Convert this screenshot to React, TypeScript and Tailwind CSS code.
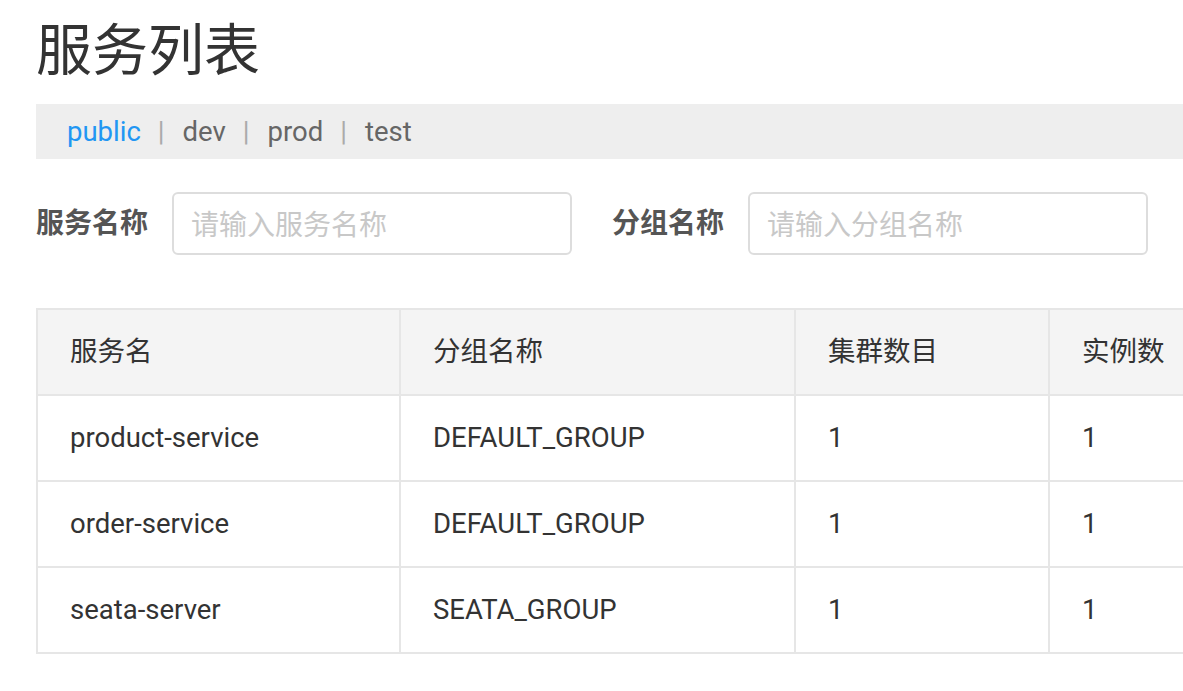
const namespaces = ['public', 'dev', 'prod', 'test'];

const rows = [
  { name: 'product-service', group: 'DEFAULT_GROUP', clusters: 1, instances: 1 },
  { name: 'order-service', group: 'DEFAULT_GROUP', clusters: 1, instances: 1 },
  { name: 'seata-server', group: 'SEATA_GROUP', clusters: 1, instances: 1 },
];

const font = "font-['Roboto','Noto_Sans_CJK_SC',sans-serif]";

function SearchField({ label, placeholder }: { label: string; placeholder: string }) {
  return (
    <div className="flex items-center gap-[24px]">
      <span className="text-[28px] font-bold text-[#555]">{label}</span>
      <input
        className="w-[400px] h-[63px] border-2 border-[#dddddd] rounded-[6px] pl-[17px] pt-[3px] text-[28px] text-[#333] placeholder:text-[#c8c8c8] outline-none"
        placeholder={placeholder}
      />
    </div>
  );
}

export default function App() {
  return (
    <div className={`${font} w-[1183px] h-[691px] overflow-hidden bg-white`}>
      <div className="pt-[23px] pl-[36px]">
        <h1 className="text-[56px] leading-[56px] text-[#333] font-normal">服务列表</h1>

        <div className="mt-[25px] h-[55px] w-[1200px] bg-[#eeeeee] flex items-center pl-[31px] text-[27.5px]">
          {namespaces.map((ns, i) => (
            <div key={ns} className="flex items-center">
              {i > 0 && <span className="ml-[17px] mr-[18px] text-[#aaa]">|</span>}
              <span className={i === 0 ? 'text-[#2196f3]' : 'text-[#666]'}>{ns}</span>
            </div>
          ))}
        </div>

        <div className="mt-[33px] flex items-center gap-[40px]">
          <SearchField label="服务名称" placeholder="请输入服务名称" />
          <SearchField label="分组名称" placeholder="请输入分组名称" />
        </div>

        <table className="mt-[53px] table-fixed border-collapse w-[1262px] text-[27.5px] text-[#333]">
          <colgroup>
            <col className="w-[363px]" />
            <col className="w-[395px]" />
            <col className="w-[254px]" />
            <col className="w-[250px]" />
          </colgroup>
          <thead>
            <tr className="bg-[#f4f4f4]">
              {['服务名', '分组名称', '集群数目', '实例数'].map((h) => (
                <th key={h} className="h-[86px] border-2 border-[#e6e6e6] pl-[32px] text-left font-normal">
                  {h}
                </th>
              ))}
            </tr>
          </thead>
          <tbody>
            {rows.map((r) => (
              <tr key={r.name}>
                <td className="h-[86px] border-2 border-[#e6e6e6] pl-[32px]">{r.name}</td>
                <td className="h-[86px] border-2 border-[#e6e6e6] pl-[32px]">{r.group}</td>
                <td className="h-[86px] border-2 border-[#e6e6e6] pl-[32px]">{r.clusters}</td>
                <td className="h-[86px] border-2 border-[#e6e6e6] pl-[32px]">{r.instances}</td>
              </tr>
            ))}
          </tbody>
        </table>
      </div>
    </div>
  );
}
